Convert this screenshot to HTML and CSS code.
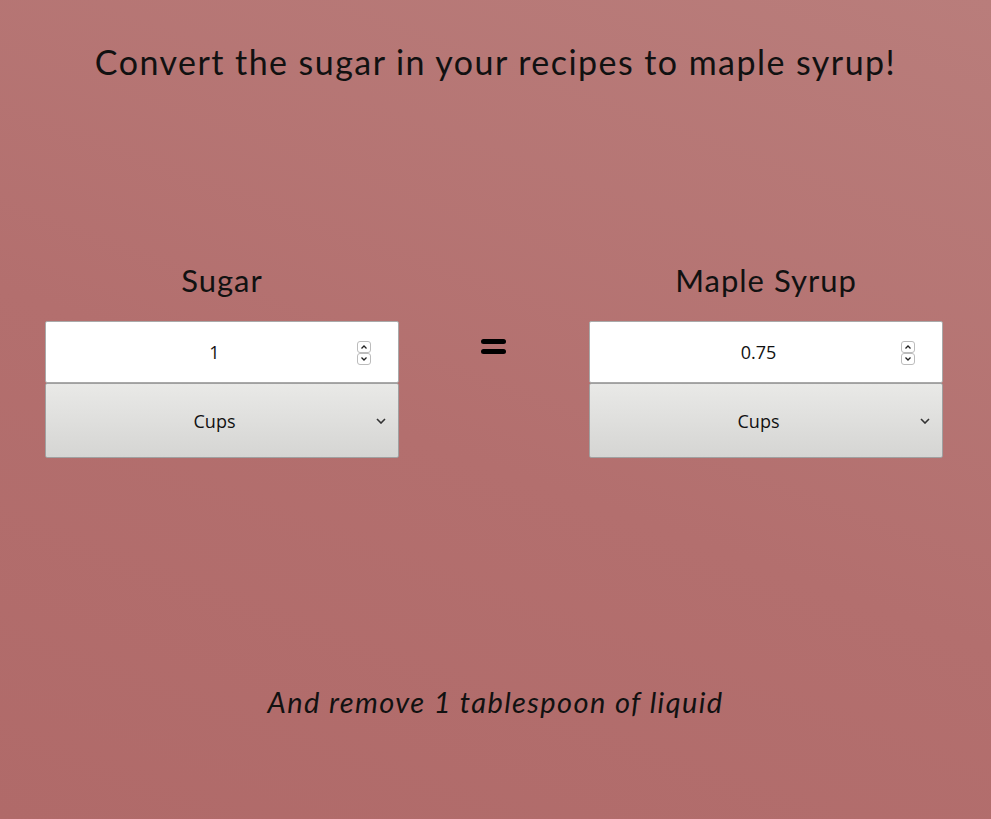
FILE: index.html
```html
<!DOCTYPE html>
<html>
<head>
<meta charset="utf-8">
<link rel="stylesheet" href="styles.css">
</head>
<body>
<main class="page">
  <h1 class="title">Convert the sugar in your recipes to maple syrup!</h1>
  <section class="converter">
    <div class="column">
      <h2 class="label">Sugar</h2>
      <div class="field">
        <span class="value">1</span>
        <span class="spinner"><span class="spin up"><svg viewBox="0 0 8 6" width="8" height="6"><path d="M1.5 4.5 L4 2 L6.5 4.5" fill="none" stroke="#222" stroke-width="1.3"/></svg></span><span class="spin down"><svg viewBox="0 0 8 6" width="8" height="6"><path d="M1.5 1.5 L4 4 L6.5 1.5" fill="none" stroke="#222" stroke-width="1.3"/></svg></span></span>
      </div>
      <div class="select">
        <span class="value">Cups</span>
        <svg class="chevron" viewBox="0 0 10 6" width="10" height="6"><path d="M1 1 L5 5 L9 1" fill="none" stroke="#333" stroke-width="1.6"/></svg>
      </div>
    </div>
    <div class="equals"><span class="bar"></span><span class="bar"></span></div>
    <div class="column">
      <h2 class="label">Maple Syrup</h2>
      <div class="field">
        <span class="value">0.75</span>
        <span class="spinner"><span class="spin up"><svg viewBox="0 0 8 6" width="8" height="6"><path d="M1.5 4.5 L4 2 L6.5 4.5" fill="none" stroke="#222" stroke-width="1.3"/></svg></span><span class="spin down"><svg viewBox="0 0 8 6" width="8" height="6"><path d="M1.5 1.5 L4 4 L6.5 1.5" fill="none" stroke="#222" stroke-width="1.3"/></svg></span></span>
      </div>
      <div class="select">
        <span class="value">Cups</span>
        <svg class="chevron" viewBox="0 0 10 6" width="10" height="6"><path d="M1 1 L5 5 L9 1" fill="none" stroke="#333" stroke-width="1.6"/></svg>
      </div>
    </div>
  </section>
  <p class="note">And remove 1 tablespoon of liquid</p>
</main>
</body>
</html>
```

FILE: styles.css
```css
html, body {
  margin: 0;
  padding: 0;
  height: 100%;
}
body {
  background: linear-gradient(200deg, #b97d7b 0%, #b36f6e 55%, #b06a69 100%);
  color: #111;
  font-family: "Lato", "Open Sans", sans-serif;
}
.page {
  width: 991px;
  height: 819px;
  display: flex;
  flex-direction: column;
  align-items: center;
  box-sizing: border-box;
}
.title {
  margin: 42px 0 0;
  font-size: 34px;
  font-weight: 400;
  line-height: 40px;
  letter-spacing: 1.45px;
}
.converter {
  margin-top: 177px;
  width: 898px;
  display: flex;
  align-items: flex-start;
  justify-content: space-between;
  align-self: flex-start;
  margin-left: 45px;
}
.column {
  width: 354px;
  display: flex;
  flex-direction: column;
}
.label {
  margin: 0 0 21px;
  padding-top: 1px;
  text-align: center;
  font-size: 31px;
  font-weight: 400;
  line-height: 40px;
  letter-spacing: 1px;
}
.field {
  height: 60px;
  background: #fff;
  border: 1px solid #a9a9a9;
  border-radius: 2px;
  display: flex;
  align-items: center;
  padding-left: 26px;
  font-family: "Open Sans", sans-serif;
  font-size: 18px;
  color: #111;
}
.field .value {
  flex: 1;
  text-align: center;
}
.spinner {
  display: flex;
  flex-direction: column;
  margin-right: 27px;
  margin-top: 1px;
}
.spin {
  width: 12px;
  height: 10px;
  border: 1px solid #bcbcbc;
  border-radius: 3px;
  display: flex;
  align-items: center;
  justify-content: center;
  background: #fff;
}
.select {
  height: 73px;
  border: 1px solid #a0a0a0;
  border-radius: 2px;
  background: linear-gradient(#e9e9e7, #d5d5d3);
  display: flex;
  align-items: center;
  padding-left: 11px;
  font-family: "Open Sans", sans-serif;
  font-size: 18px;
  color: #111;
}
.select .value {
  flex: 1;
  text-align: center;
}
.chevron {
  margin-right: 12px;
  margin-left: 4px;
}
.equals {
  margin-top: 80px;
  display: flex;
  flex-direction: column;
  gap: 5px;
  margin-right: 2px;
}
.equals .bar {
  display: block;
  width: 25px;
  height: 5px;
  background: #000;
  border-radius: 3px;
}
.note {
  margin: 226px 0 0;
  font-size: 29px;
  font-style: italic;
  line-height: 36px;
  letter-spacing: 1.4px;
}
```
